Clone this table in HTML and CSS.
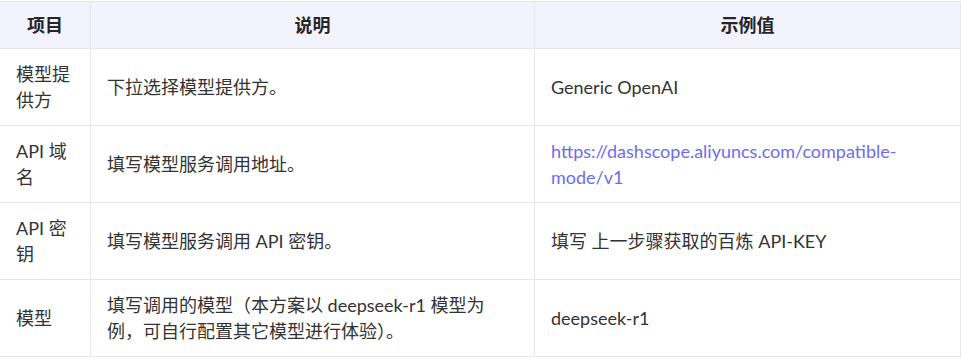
FILE: index.html
```html
<!DOCTYPE html>
<html lang="zh-CN">
<head>
<meta charset="utf-8">
<link rel="stylesheet" href="styles.css">
</head>
<body>
<table class="tbl">
  <colgroup>
    <col class="c1">
    <col class="c2">
    <col class="c3">
  </colgroup>
  <thead>
    <tr><th>项目</th><th>说明</th><th>示例值</th></tr>
  </thead>
  <tbody>
    <tr><td>模型提供方</td><td>下拉选择模型提供方。</td><td>Generic OpenAI</td></tr>
    <tr><td>API 域名</td><td>填写模型服务调用地址。</td><td><a class="link" href="#">https://dashscope.aliyuncs.com/compatible-mode/v1</a></td></tr>
    <tr><td>API 密钥</td><td>填写模型服务调用 API 密钥。</td><td>填写 上一步骤获取的百炼 API-KEY</td></tr>
    <tr><td>模型</td><td>填写调用的模型（本方案以 deepseek-r1 模型为例，可自行配置其它模型进行体验）。</td><td>deepseek-r1</td></tr>
  </tbody>
</table>
</body>
</html>
```

FILE: styles.css
```css
html, body {
  margin: 0;
  padding: 0;
  background: #ffffff;
}
body {
  font-family: "Lato", "Noto Sans CJK SC", sans-serif;
  font-size: 18px;
  color: #333333;
}
.tbl {
  border-collapse: collapse;
  table-layout: fixed;
  width: 961px;
  margin: 1px 0 0 -1px;
}
.c1 { width: 91px; }
.c2 { width: 444px; }
.c3 { width: 426px; }
.tbl th, .tbl td {
  border: 1px solid #e6e6ef;
  padding: 12px 16px;
  line-height: 26px;
  text-align: left;
  vertical-align: middle;
  word-break: break-word;
}
.tbl th {
  background: #f3f3fd;
  font-weight: 700;
  text-align: center;
  padding: 10px 16px;
  color: #262626;
}
.link {
  color: #6c6cf2;
  text-decoration: none;
}
```
